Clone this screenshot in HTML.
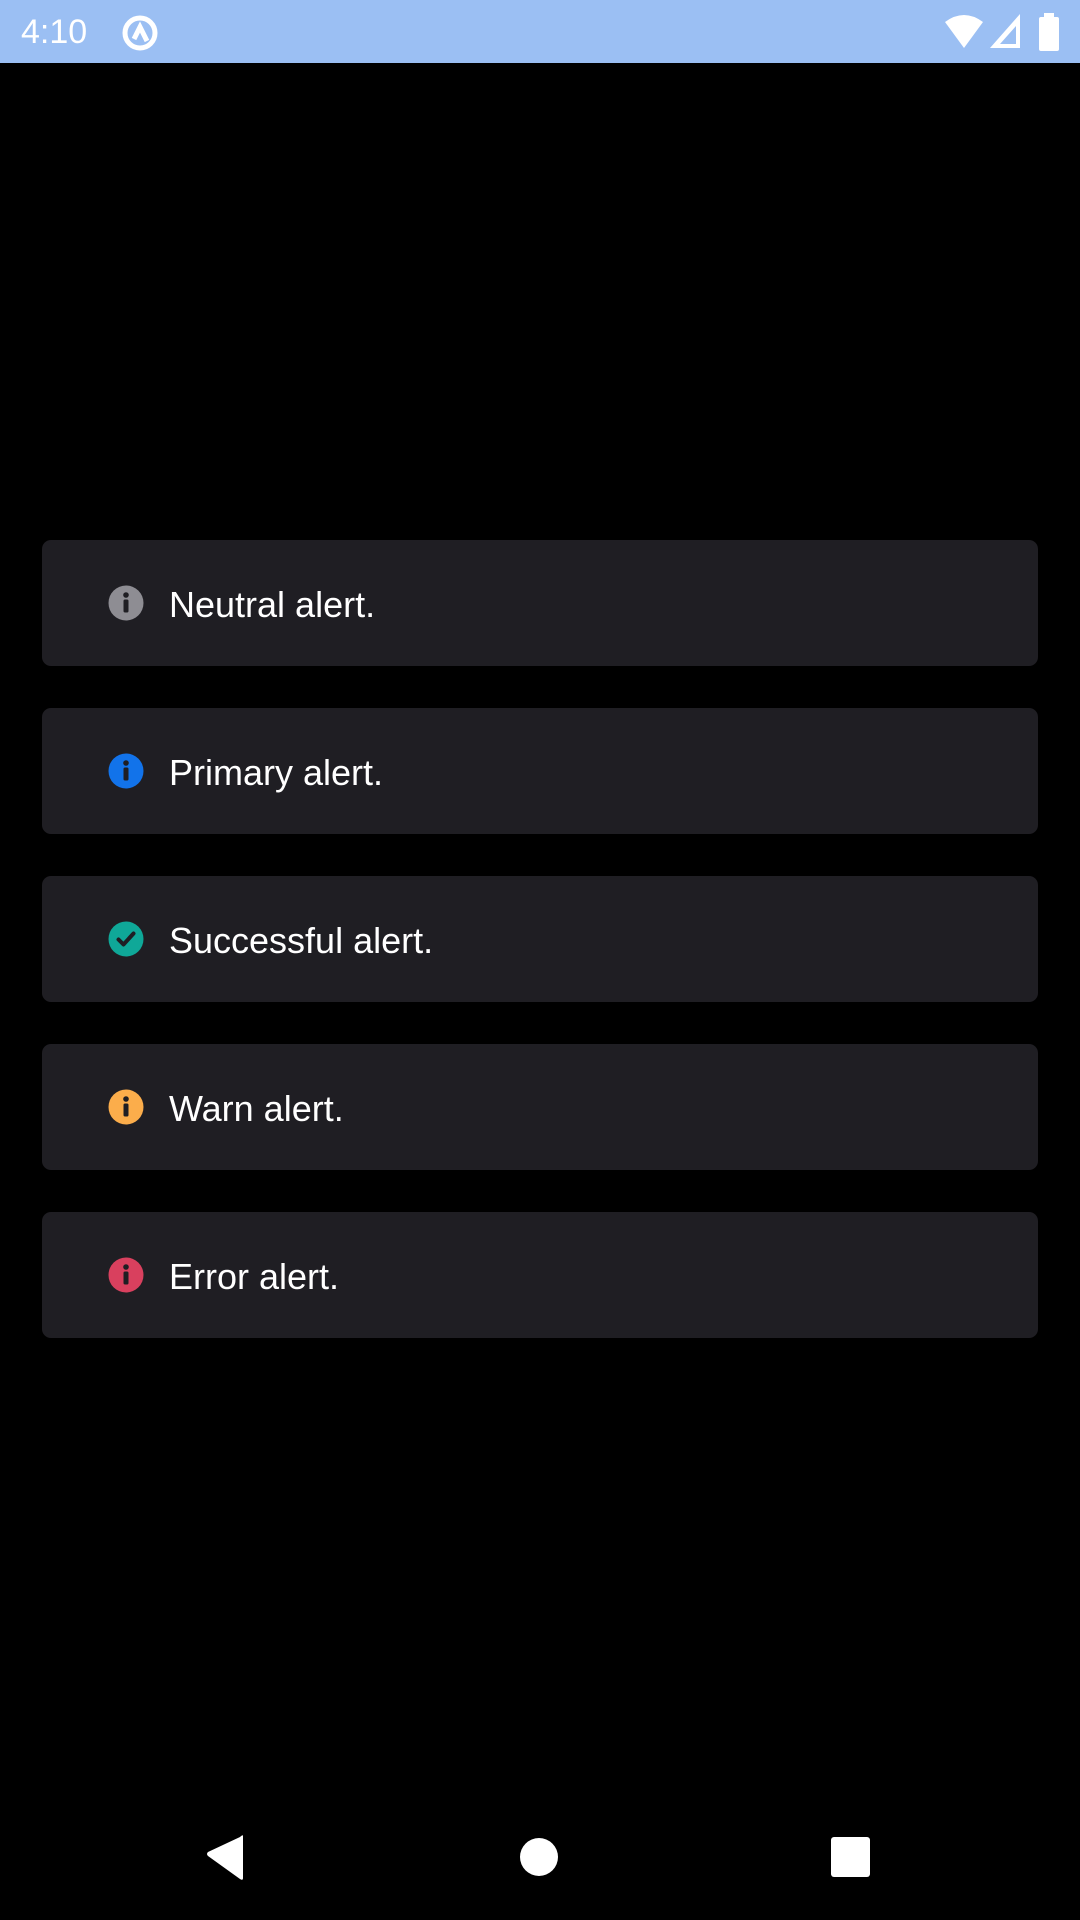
<!DOCTYPE html>
<html><head><meta charset="utf-8"><style>
body{margin:0;width:1080px;height:1920px;background:#000;position:relative;overflow:hidden;font-family:"Liberation Sans",sans-serif}
.sb{position:absolute;left:0;top:0;width:1080px;height:63px;background:#9bbff3}
.time{position:absolute;left:21px;top:13px;color:#fff;font-size:34px}
.card{position:absolute;left:42px;width:996px;height:126px;background:#1f1e23;border-radius:9px}
.card svg{position:absolute;left:66px;top:45px}
.card span{position:absolute;left:127px;top:44px;color:#fff;font-size:36px}
</style></head><body>
<div class="sb">
<div class="time">4:10</div>
<svg style="position:absolute;left:120px;top:13px" width="40" height="40" viewBox="0 0 40 40"><circle cx="20" cy="20" r="15" fill="none" stroke="#fff" stroke-width="5"/><path d="M14 26 L20 14 L27 28" fill="none" stroke="#fff" stroke-width="5"/></svg>
<svg style="position:absolute;left:940px;top:12px" width="125" height="40" viewBox="0 0 125 40"><path d="M5 10 Q24 -4 43 10 L24 36 Z" fill="#fff"/><path d="M50 36 L80 2 L80 36 Z M60 32 L76 32 L76 14 Z" fill="#fff" fill-rule="evenodd"/><rect x="99" y="5" width="20" height="34" rx="2" fill="#fff"/><rect x="104" y="1" width="10" height="5" fill="#fff"/></svg>
</div>

<div class="card" style="top:540px"><svg width="36" height="36" viewBox="0 0 36 36"><circle cx="18" cy="18" r="17.5" fill="#8e8d93"/><circle cx="18" cy="10" r="2.8" fill="#1f1e23"/><rect x="15.5" y="14.5" width="5" height="13" rx="1.5" fill="#1f1e23"/></svg><span>Neutral alert.</span></div>
<div class="card" style="top:708px"><svg width="36" height="36" viewBox="0 0 36 36"><circle cx="18" cy="18" r="17.5" fill="#1273ea"/><circle cx="18" cy="10" r="2.8" fill="#1f1e23"/><rect x="15.5" y="14.5" width="5" height="13" rx="1.5" fill="#1f1e23"/></svg><span>Primary alert.</span></div>
<div class="card" style="top:876px"><svg width="36" height="36" viewBox="0 0 36 36"><circle cx="18" cy="18" r="17.5" fill="#0fa898"/><path d="M10.5 18.5 L15.5 23.5 L25.5 12.5" fill="none" stroke="#1f1e23" stroke-width="4" stroke-linecap="round" stroke-linejoin="round"/></svg><span>Successful alert.</span></div>
<div class="card" style="top:1044px"><svg width="36" height="36" viewBox="0 0 36 36"><circle cx="18" cy="18" r="17.5" fill="#fbad4b"/><circle cx="18" cy="10" r="2.8" fill="#1f1e23"/><rect x="15.5" y="14.5" width="5" height="13" rx="1.5" fill="#1f1e23"/></svg><span>Warn alert.</span></div>
<div class="card" style="top:1212px"><svg width="36" height="36" viewBox="0 0 36 36"><circle cx="18" cy="18" r="17.5" fill="#d9405e"/><circle cx="18" cy="10" r="2.8" fill="#1f1e23"/><rect x="15.5" y="14.5" width="5" height="13" rx="1.5" fill="#1f1e23"/></svg><span>Error alert.</span></div>

<svg style="position:absolute;left:0;top:1820px" width="1080" height="80" viewBox="0 0 1080 80"><path d="M243 16 L243 58 Q243 61 240 59 L208 36 Q206 34 208 32 L240 17 Q243 14 243 16 Z" fill="#fff"/><circle cx="539" cy="37" r="19" fill="#fff"/><rect x="831" y="17" width="39" height="40" rx="3" fill="#fff"/></svg>
</body></html>
